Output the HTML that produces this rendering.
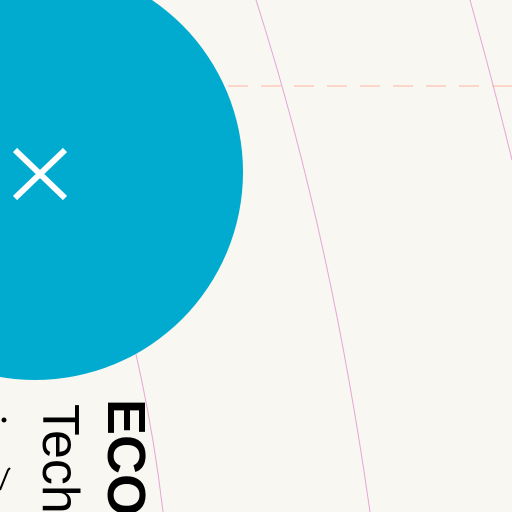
<!DOCTYPE html>
<html><head><style>
html,body{margin:0;padding:0;width:512px;height:512px;overflow:hidden;}
body{background:#f8f7f1;position:relative;font-family:"Liberation Sans",sans-serif;}
.r{position:absolute;transform:rotate(90deg);transform-origin:0 0;white-space:nowrap;line-height:1;color:#000;}
</style></head><body>
<svg width="512" height="512" style="position:absolute;left:0;top:0">
<path d="M256,0 Q330,230 370,512" fill="none" stroke="#e5a6d6" stroke-width="1"/>
<path d="M470,0 Q495,90 512,160" fill="none" stroke="#e5a6d6" stroke-width="1"/>
<path d="M120,290 Q150,400 163,512" fill="none" stroke="#e5a6d6" stroke-width="1"/>
<line x1="228" y1="86" x2="512" y2="86" stroke="#ffb49e" stroke-width="1" stroke-dasharray="20 13"/>
<circle cx="35" cy="172" r="208" fill="#00abcf"/>
<path d="M15,150 L65,198 M65,150 L15,198" stroke="#fff" stroke-width="6"/>
<circle cx="4" cy="420" r="2.5" fill="#000"/>
<path d="M10,468 L8,470 L0,490" fill="none" stroke="#000" stroke-width="2"/>
</svg>
<div class="r" style="left:153px;top:399px;font-size:54px;font-weight:bold;">ECON</div>
<div class="r" style="left:86px;top:404px;font-size:52px;">Tech</div>
</body></html>
